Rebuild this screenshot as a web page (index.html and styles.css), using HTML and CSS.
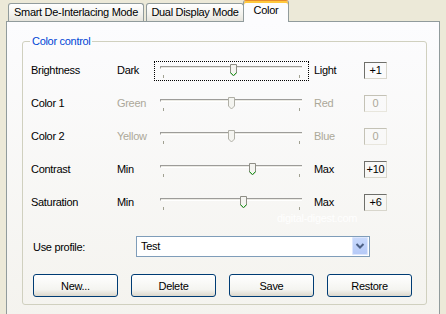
FILE: index.html
```html
<!DOCTYPE html>
<html lang="en">
<head>
  <meta charset="UTF-8" />
  <title>Color</title>
  <link rel="stylesheet" href="styles.css">
</head>
<body>
  <div class="tabs">
    <div class="tab">Smart De-Interlacing Mode</div>
    <div class="tab">Dual Display Mode</div>
    <div class="tab active">Color</div>
  </div>

  <div class="pane">
    <fieldset class="group">
      <legend>Color control</legend>

      <div class="row">
        <span class="name">Brightness</span>
        <span class="low">Dark</span>
        <div class="slider focus">
          <div class="track"></div>
          <div class="ticks"><i></i><i></i></div>
          <svg class="thumb on" style="left:75px" width="7" height="13" viewBox="0 0 7 13"><path class="body" d="M0.5 0.5H6.5V9L3.5 12L0.5 9Z"/><path class="edge" d="M0.5 8.5L3.5 11.5L6.5 8.5"/></svg>
        </div>
        <span class="high">Light</span>
        <span class="value">+1</span>
      </div>

      <div class="row off">
        <span class="name">Color 1</span>
        <span class="low">Green</span>
        <div class="slider">
          <div class="track"></div>
          <div class="ticks"><i></i><i></i></div>
          <svg class="thumb" style="left:73px" width="7" height="13" viewBox="0 0 7 13"><path class="body" d="M0.5 0.5H6.5V9L3.5 12L0.5 9Z"/></svg>
        </div>
        <span class="high">Red</span>
        <span class="value">0</span>
      </div>

      <div class="row off">
        <span class="name">Color 2</span>
        <span class="low">Yellow</span>
        <div class="slider">
          <div class="track"></div>
          <div class="ticks"><i></i><i></i></div>
          <svg class="thumb" style="left:73px" width="7" height="13" viewBox="0 0 7 13"><path class="body" d="M0.5 0.5H6.5V9L3.5 12L0.5 9Z"/></svg>
        </div>
        <span class="high">Blue</span>
        <span class="value">0</span>
      </div>

      <div class="row">
        <span class="name">Contrast</span>
        <span class="low">Min</span>
        <div class="slider">
          <div class="track"></div>
          <div class="ticks"><i></i><i></i></div>
          <svg class="thumb on" style="left:94px" width="7" height="13" viewBox="0 0 7 13"><path class="body" d="M0.5 0.5H6.5V9L3.5 12L0.5 9Z"/><path class="edge" d="M0.5 8.5L3.5 11.5L6.5 8.5"/></svg>
        </div>
        <span class="high">Max</span>
        <span class="value">+10</span>
      </div>

      <div class="row">
        <span class="name">Saturation</span>
        <span class="low">Min</span>
        <div class="slider">
          <div class="track"></div>
          <div class="ticks"><i></i><i></i></div>
          <svg class="thumb on" style="left:85px" width="7" height="13" viewBox="0 0 7 13"><path class="body" d="M0.5 0.5H6.5V9L3.5 12L0.5 9Z"/><path class="edge" d="M0.5 8.5L3.5 11.5L6.5 8.5"/></svg>
        </div>
        <span class="high">Max</span>
        <span class="value">+6</span>
      </div>

      <div class="profile">
        <span class="name">Use profile:</span>
        <div class="combo">
          <span class="combo-text">Test</span>
          <div class="drop">
            <svg width="16" height="17" viewBox="0 0 16 17"><path d="M4.5 7L8 10.5L11.5 7" fill="none" stroke="#4D6185" stroke-width="2"/></svg>
          </div>
        </div>
      </div>

      <div class="buttons">
        <button>New...</button>
        <button>Delete</button>
        <button>Save</button>
        <button>Restore</button>
      </div>
    </fieldset>

    <div class="watermark">digital-digest.com</div>
  </div>
</body>
</html>
```

FILE: styles.css
```css
body {
  margin: 0;
  height: 314px;
  overflow: hidden;
  background: #ece9d8;
  font-family: "Liberation Sans", Arial, sans-serif;
  font-size: 11px;
  letter-spacing: -0.3px;
  color: #000;
}

/* tabs */
.tabs {
  display: flex; align-items: flex-end;
  height: 21px; padding-left: 8px;
}
.tab {
  box-sizing: border-box;
  height: 18px; line-height: 16px;
  margin-right: 2px;
  border: 1px solid #919b9c; border-bottom: none;
  border-radius: 3px 3px 0 0;
  background: linear-gradient(#ffffff, #f3f2ed 60%, #e6e4dc);
  text-align: center;
  white-space: nowrap;
}
.tab:nth-child(1) { width: 136px; }
.tab:nth-child(2) { width: 98px; margin-right: 0; }
.tab.active {
  position: relative; z-index: 1;
  width: 46px; height: 22px;
  margin-left: -1px; margin-bottom: -1px;
  padding-top: 1px;
  border-top: 1px solid #e68b2c;
  box-shadow: inset 0 2px 0 #ffc83c;
  background: #fcfcfe;
}

/* pane */
.pane {
  position: relative;
  box-sizing: border-box;
  width: 434px; height: 300px;
  margin-left: 6px;
  border: 1px solid #919b9c;
  background: linear-gradient(#fcfcfe, #f4f3ee);
}
.group {
  box-sizing: border-box;
  width: 405px;
  margin: 13px 0 0 15px;
  padding: 6px 0 7px 0;
  border: 1px solid #d0d0bf; border-radius: 3px;
}
.group legend {
  margin-left: 7px; padding: 0 2px;
  line-height: 13px;
  color: #0046d5;
}

/* slider rows */
.row {
  display: flex; align-items: center;
  height: 33px; padding-left: 8px;
}
.name { width: 86px; }
.low { width: 37px; }
.high { width: 50px; margin-left: 5px; }
.row .name, .row .low, .row .high { padding-bottom: 2px; }
.row.off .low, .row.off .high, .row.off .value { color: #aca899; }

.slider {
  position: relative;
  box-sizing: border-box;
  width: 155px; height: 20px;
  border: 1px dotted transparent;
}
.slider.focus { border-color: #000; }
.track {
  box-sizing: border-box;
  height: 3px;
  margin: 4px 6px 0 5px;
  border-top: 1px solid #9d9c99; border-left: 1px solid #9d9c99;
  border-bottom: 1px solid #ffffff;
  background: #ebeae4;
}
.ticks {
  display: flex; justify-content: space-between;
  margin-top: 6px; padding: 0 8px;
}
.ticks i { width: 1px; height: 3px; background: #a1a192; }
.thumb { position: absolute; top: 2px; }
.thumb .body { fill: #f4f4f0; stroke: #b0afa6; }
.thumb.on .body { stroke: #8f8e86; }
.thumb .edge { fill: none; stroke: #21a121; }

.value {
  box-sizing: border-box;
  width: 23px; height: 17px; line-height: 15px;
  border: 1px solid; border-color: #6f6f6a #d8d6cc #d8d6cc #6f6f6a;
  text-align: center;
}
.row.off .value { border-color: #c4c2b6 #e8e6dd #e8e6dd #c4c2b6; }

/* profile */
.profile {
  display: flex; align-items: center;
  margin-top: 17px; padding-left: 10px;
}
.profile .name { width: 103px; }
.combo {
  box-sizing: border-box;
  display: flex; align-items: stretch;
  width: 234px; height: 21px;
  padding: 0 1px 1px 0;
  border: 1px solid #7f9db9;
  background: #fff;
}
.combo-text { flex: 1; padding-left: 4px; line-height: 19px; }
.drop {
  width: 16px;
  border-radius: 2px;
  background: linear-gradient(#c9dafc, #b5c9f7);
  box-shadow: inset 0 0 0 1px #dde7fd;
}
.drop svg { display: block; }

/* buttons */
.buttons {
  display: flex; justify-content: space-between;
  margin-top: 17px; padding: 0 14px 0 10px;
}
.buttons button {
  width: 85px; height: 23px; padding: 0;
  border: 1px solid #003c74; border-radius: 3px;
  background: linear-gradient(#ffffff, #f4f4f0 70%, #dcd8cc);
  font: inherit; letter-spacing: inherit; color: #000;
}

.watermark {
  position: absolute; left: 270px; top: 190px;
  color: rgba(255, 255, 255, 0.95);
  font-size: 11px;
}
```
